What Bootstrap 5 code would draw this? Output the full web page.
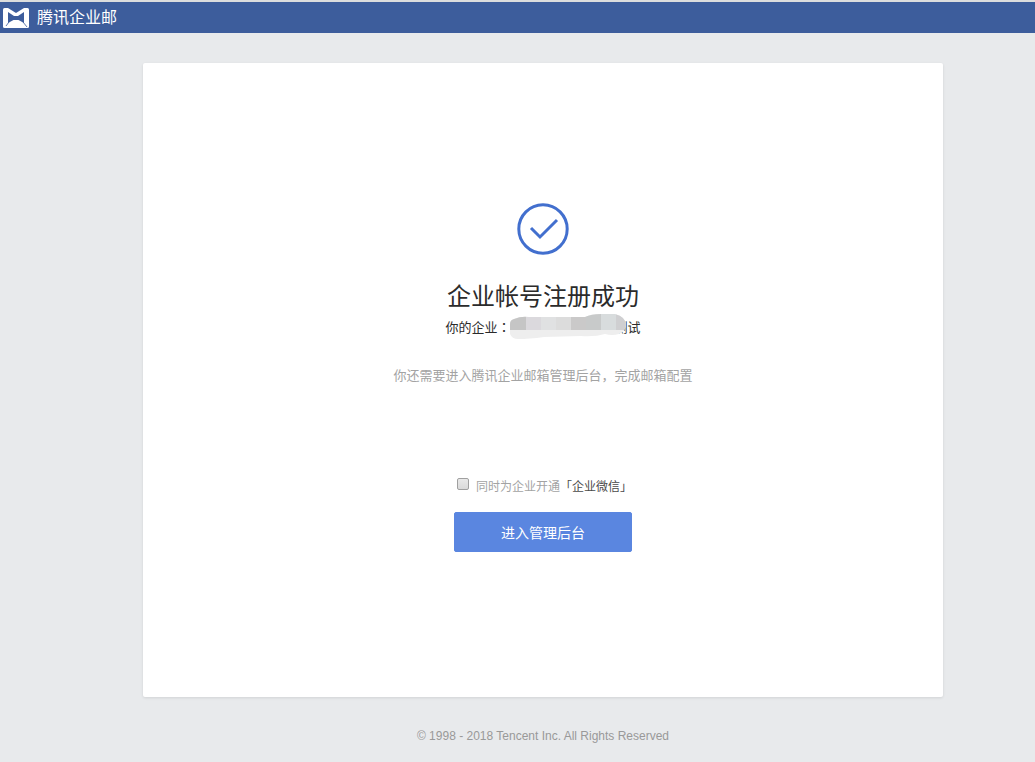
<!DOCTYPE html>
<html lang="zh-CN">
<head>
<meta charset="utf-8">
<meta name="viewport" content="width=device-width, initial-scale=1">
<title>腾讯企业邮</title>
<link href="https://cdn.jsdelivr.net/npm/bootstrap@5.3.0/dist/css/bootstrap.min.css" rel="stylesheet">
<style>
  body { background: #e8eaec; font-family: "Liberation Sans", "Noto Sans CJK SC", sans-serif; font-size: 13px; line-height: 20px; color: #2b2b2b; border-top: 2px solid #dcdddd; }
  .topbar { background: #3d5d9c; height: 31px; padding: 0 3px; }
  .topbar a { color: #fff; font-size: 16px; }
  .page-shell { padding-left: 51px; }
  .panel { max-width: 800px; margin-top: 30px; padding: 140px 20px 145px; border-radius: 2px; box-shadow: 0 1px 3px rgba(0,0,0,.1); }
  .title { font-size: 24px; line-height: 32px; font-weight: 400; margin: 26px 0 4px; }
  .company { line-height: 22px; }
  .mid-punct { font-family: "Noto Sans CJK TC", sans-serif; line-height: 1; }
  .hidden-name { width: 104px; height: 22px; }
  .hidden-name svg { left: -2px; top: -3px; }
  .hint { color: #a3a3a3; margin: 27px 0 91px; }
  .wework { font-size: 12px; color: #a3a3a3; gap: 7px; padding-left: 3px; margin-bottom: 15px; }
  .wework input { appearance: none; width: 12px; height: 12px; margin: 0 0 6px; border: 1px solid #a0a0a0; border-radius: 2px; background: linear-gradient(#e9e9e9, #dadada); }
  .wework input:checked { background: #5a86e0; }
  .wework a { color: #4a4a4a; }
  .enter { --bs-btn-color: #fff; --bs-btn-bg: #5a86e0; --bs-btn-border-color: #5a86e0; --bs-btn-hover-color: #fff; --bs-btn-hover-bg: #4a76d0; width: 178px; height: 40px; font-size: 14px; border-radius: 2px; }
  .enter.btn { padding: 2px 0 0; }
  .copyright { font-size: 12px; color: #999; margin: 29px 0 16px; }
</style>
</head>
<body>
<header class="topbar d-flex align-items-center">
  <a href="#" class="d-flex align-items-center gap-2 text-decoration-none">
    <svg width="26" height="20" viewBox="0 0 26 20" aria-hidden="true">
      <rect width="26" height="20" rx="1.5" fill="#fff"/>
      <path d="M5 0H21L13 5Z" fill="#3d5d9c"/>
      <path d="M5 4L11 8H15L21 4V15L15.500 12H10.500L5 15Z" fill="#3d5d9c"/>
      <path d="M6 14L3 18M20 14L24 19" stroke="#3d5d9c" stroke-width=".8" fill="none"/>
    </svg>
    <span>腾讯企业邮</span>
  </a>
</header>
<div class="page-shell d-flex flex-column align-items-center">
  <main class="panel bg-white w-100 d-flex flex-column align-items-center text-center">
    <svg width="52" height="52" viewBox="0 0 52 52" fill="none" stroke="#426fce" stroke-width="3" aria-hidden="true">
      <circle cx="26" cy="26" r="24.2"/>
      <path d="M14 25L23 34L40 17"/>
    </svg>
    <h1 class="title">企业帐号注册成功</h1>
    <div class="company d-flex justify-content-center">
      <span>你的企业<span class="mid-punct" lang="zh-TW">：</span></span>
      <span class="hidden-name position-relative">
        <svg class="position-absolute" width="118" height="26" viewBox="0 0 118 26" aria-hidden="true">
          <defs><clipPath id="smear"><path d="M5 5Q12 2 20 3L76 3Q82 0 92 0H106Q117 3 117 11Q116 18 110 20Q103 22 96 20Q86 23 72 22L35 23Q20 25 9 25Q3 25 1 20V10Q1 6 5 5Z"/></clipPath></defs>
          <g clip-path="url(#smear)">
            <rect width="118" height="26" fill="#eee"/>
            <rect x="1" width="16" height="16" fill="#c5c5c5"/>
            <rect x="17" width="15" height="16" fill="#dbd9dd"/>
            <rect x="32" width="15" height="16" fill="#e0e1e2"/>
            <rect x="47" width="15" height="16" fill="#dcdcdc"/>
            <rect x="62" width="15" height="16" fill="#cac9c9"/>
            <rect x="77" width="15" height="16" fill="#c8caca"/>
            <rect x="92" width="15" height="16" fill="#d8dcdd"/>
            <rect x="107" width="11" height="16" fill="#cfcfd1"/>
          </g>
        </svg>
      </span>
      <span>测试</span>
    </div>
    <p class="hint">你还需要进入腾讯企业邮箱管理后台，完成邮箱配置</p>
    <div class="wework d-flex align-items-center">
      <input type="checkbox" id="wework">
      <div><label for="wework">同时为企业开通</label><a href="#" class="text-decoration-none">「企业微信」</a></div>
    </div>
    <button type="button" class="enter btn">进入管理后台</button>
  </main>
  <footer class="copyright">© 1998 - 2018 Tencent Inc. All Rights Reserved</footer>
</div>
<script src="https://cdn.jsdelivr.net/npm/bootstrap@5.3.0/dist/js/bootstrap.bundle.min.js"></script>
</body>
</html>
